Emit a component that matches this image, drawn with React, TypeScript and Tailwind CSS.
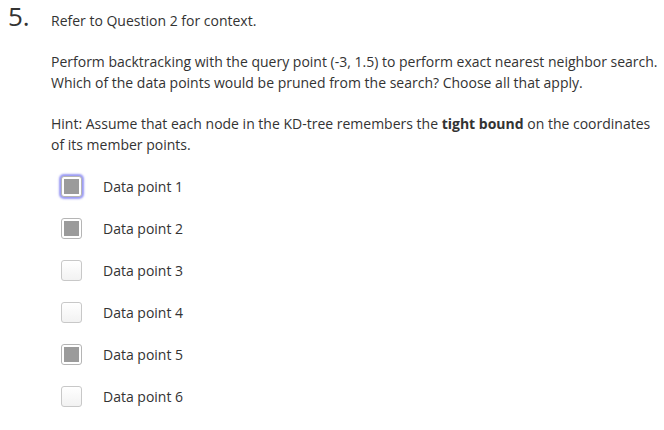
import React from "react";

const items = [
  { label: "Data point 1", checked: true, focus: true },
  { label: "Data point 2", checked: true },
  { label: "Data point 3", checked: false },
  { label: "Data point 4", checked: false },
  { label: "Data point 5", checked: true },
  { label: "Data point 6", checked: false },
];

function Box({ checked, focus }: { checked: boolean; focus?: boolean }) {
  return (
    <div
      className={
        "w-[21px] h-[21px] rounded-[3px] border flex items-center justify-center " +
        (checked ? "border-[#b5b5b5] bg-white " : "border-[#c8c8c8] bg-gradient-to-b from-[#ffffff] to-[#f2f2f2] ") +
        (focus ? "shadow-[0_0_2px_2px_rgba(120,120,240,0.75)]" : "")
      }
    >
      {checked && <div className="w-[15px] h-[15px] bg-[#9b9b9b]" />}
    </div>
  );
}

export default function App() {
  return (
    <div className="w-[664px] h-[430px] bg-white text-[#333333] font-['Open_Sans',sans-serif] relative">
      <div className="flex">
        <div className="w-[51px] pl-[8px] text-[26px] leading-[32px] text-[#333]">5.</div>
        <div className="text-[14px] leading-[21px] pt-[10px] flex-1">
          <p>Refer to Question 2 for context.</p>
          <p className="mt-[20px]">
            Perform backtracking with the query point (-3, 1.5) to perform exact nearest neighbor search.
            <br />
            Which of the data points would be pruned from the search? Choose all that apply.
          </p>
          <p className="mt-[20px]">
            Hint: Assume that each node in the KD-tree remembers the <b>tight bound</b> on the coordinates
            <br />
            of its member points.
          </p>
          <div className="mt-[21px] flex flex-col gap-[21px] pl-[10px]">
            {items.map((it) => (
              <div key={it.label} className="flex items-center h-[21px]">
                <Box checked={it.checked} focus={it.focus} />
                <span className="ml-[21px]">{it.label}</span>
              </div>
            ))}
          </div>
        </div>
      </div>
    </div>
  );
}
